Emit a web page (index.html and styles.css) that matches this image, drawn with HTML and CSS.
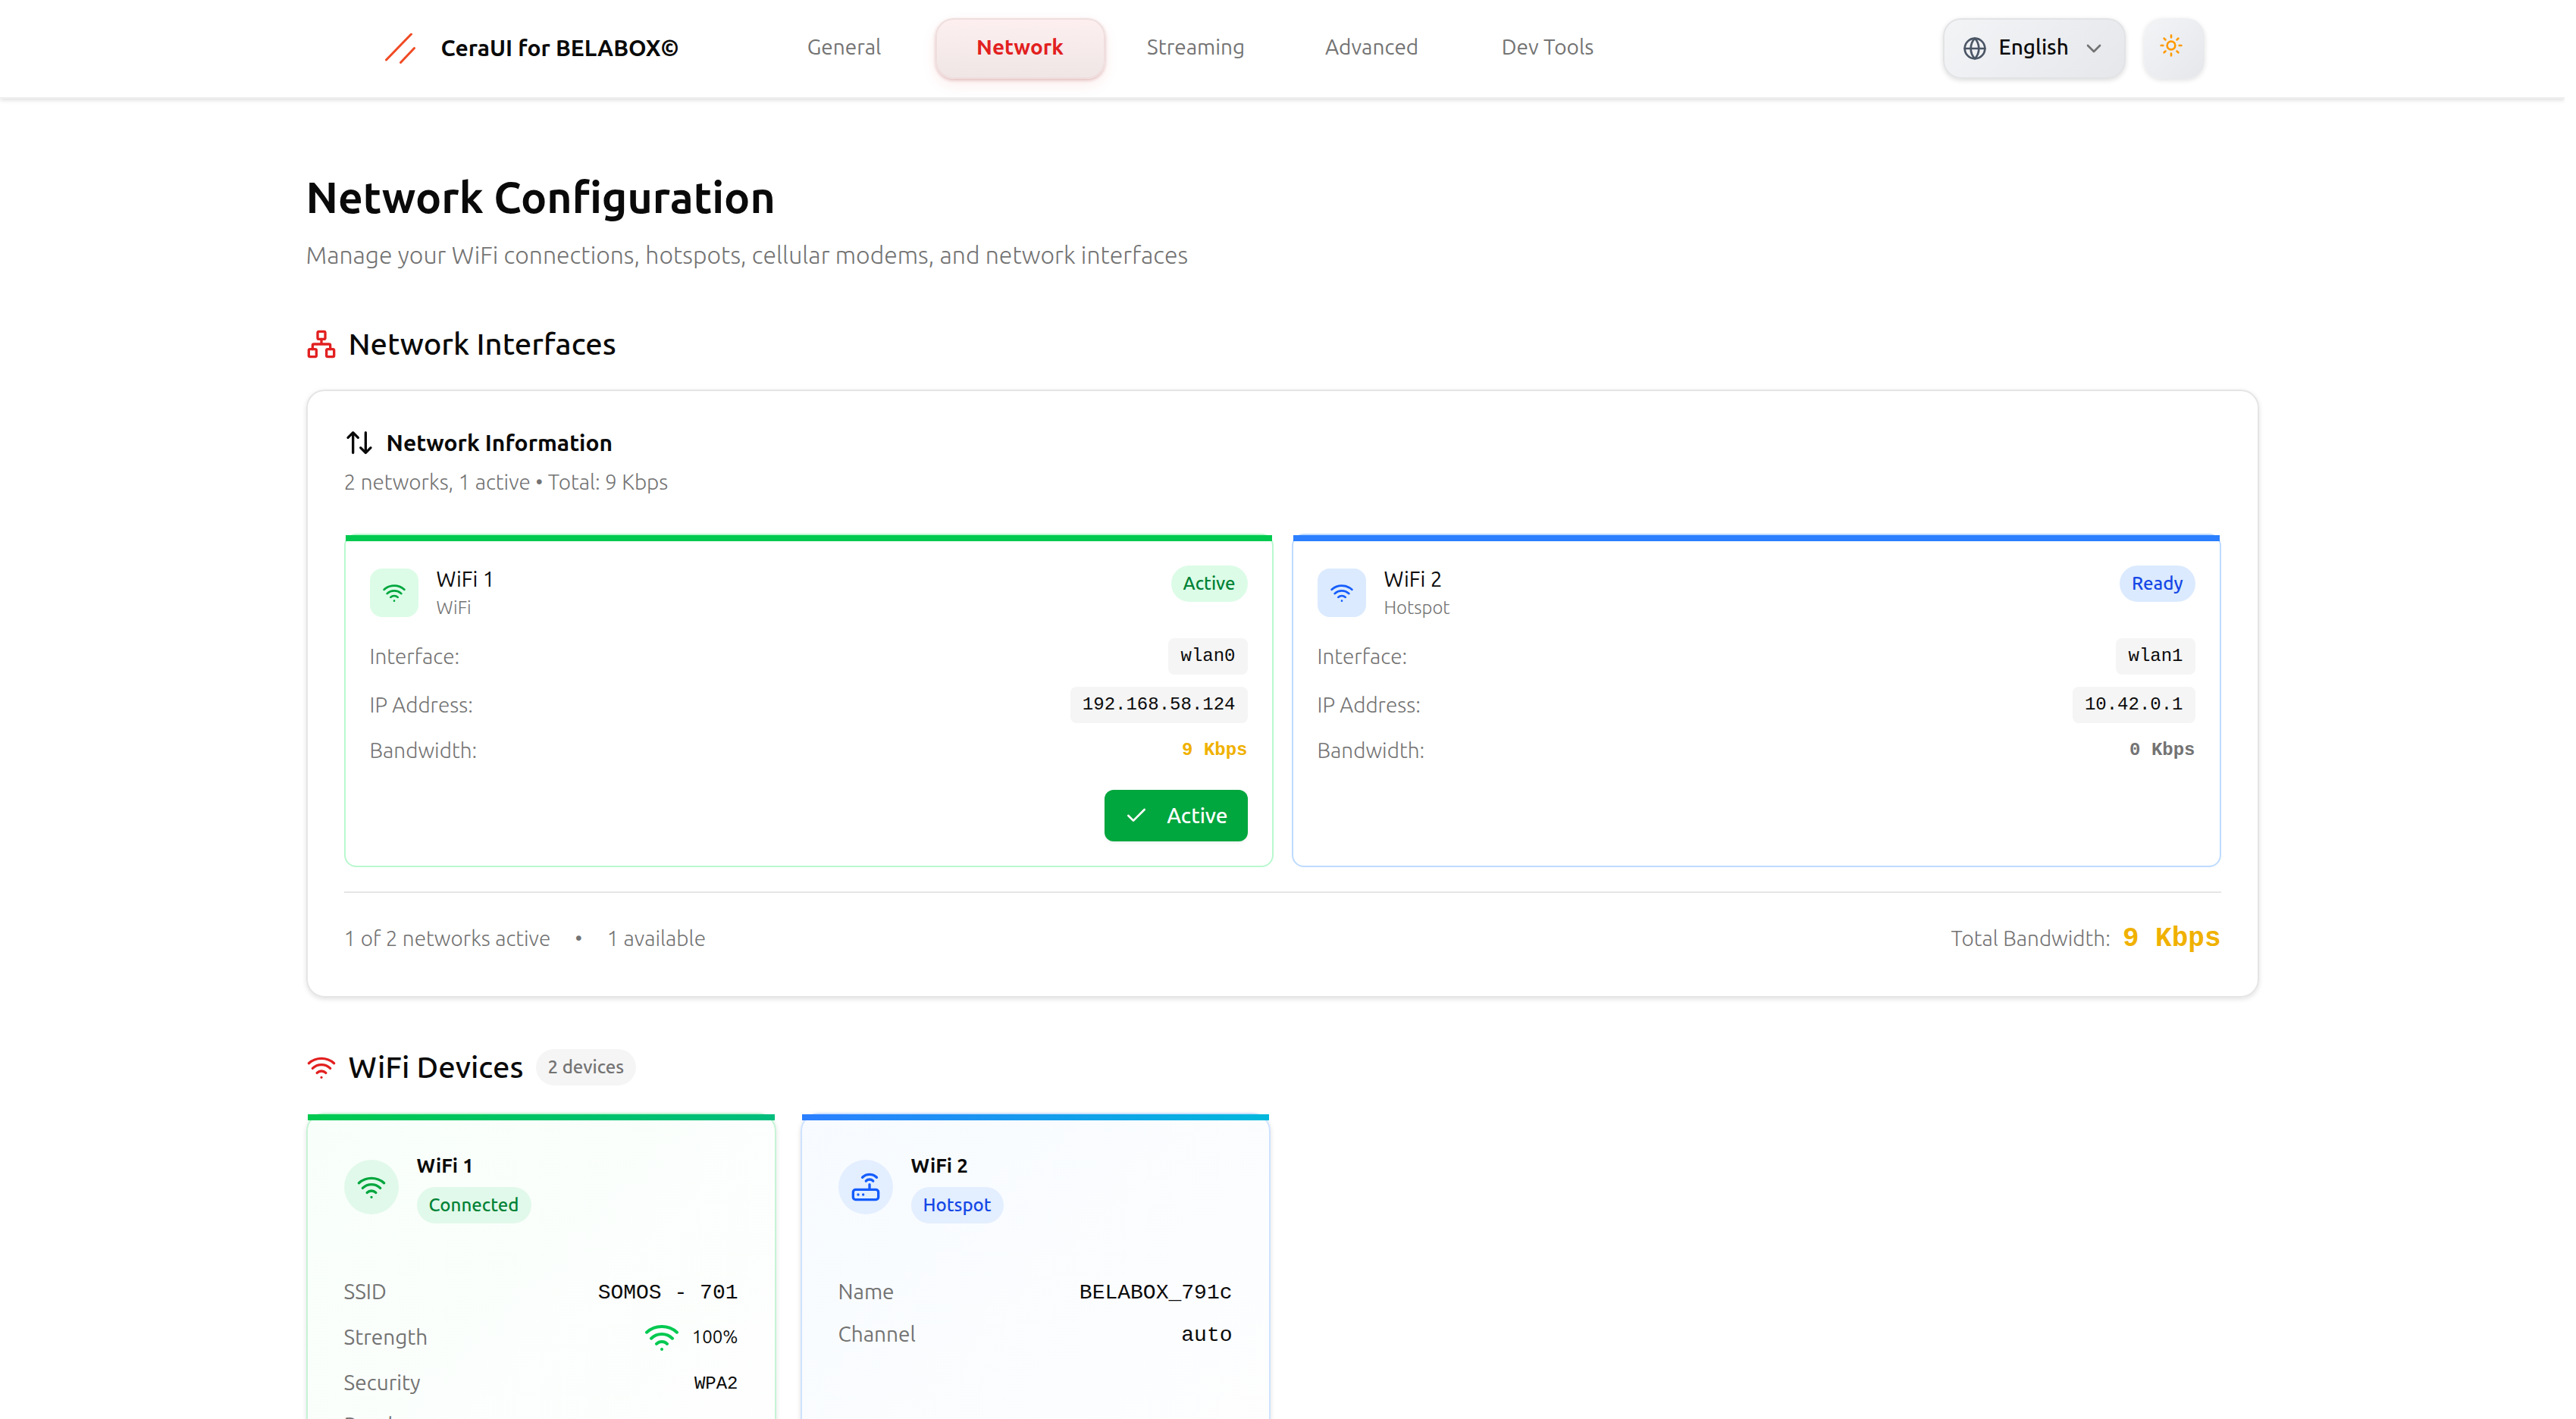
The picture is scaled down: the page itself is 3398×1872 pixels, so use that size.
FILE: index.html
```html
<!DOCTYPE html>
<html lang="en">
<head>
<meta charset="utf-8">
<meta name="viewport" content="width=device-width, initial-scale=1">
<title>CeraUI for BELABOX©</title>
<link rel="stylesheet" href="styles.css">
</head>
<body>
<svg class="sprite" aria-hidden="true">
  <symbol id="wifi" viewBox="0 0 24 24"><path d="M12 20h.01M2 8.82a15 15 0 0 1 20 0M5 12.859a10 10 0 0 1 14 0M8.5 16.429a5 5 0 0 1 7 0"/></symbol>
  <symbol id="network" viewBox="0 0 24 24"><rect x="16" y="16" width="6" height="6" rx="1"/><rect x="2" y="16" width="6" height="6" rx="1"/><rect x="9" y="2" width="6" height="6" rx="1"/><path d="M5 16v-3a1 1 0 0 1 1-1h12a1 1 0 0 1 1 1v3M12 12V8"/></symbol>
  <symbol id="arrows" viewBox="0 0 24 24"><path d="m21 16-4 4-4-4M17 20V4M3 8l4-4 4 4M7 4v16"/></symbol>
  <symbol id="router" viewBox="0 0 24 24"><rect x="2" y="14" width="20" height="8" rx="2"/><path d="M6.01 18H6M10.01 18H10M15 10v4M17.84 7.17a4 4 0 0 0-5.66 0M20.66 4.34a8 8 0 0 0-11.31 0"/></symbol>
  <symbol id="check" viewBox="0 0 24 24"><path d="M20 6 9 17l-5-5"/></symbol>
  <symbol id="globe" viewBox="0 0 24 24"><circle cx="12" cy="12" r="10"/><path d="M12 2a14.5 14.5 0 0 0 0 20 14.5 14.5 0 0 0 0-20M2 12h20"/></symbol>
  <symbol id="chevron" viewBox="0 0 24 24"><path d="m6 9 6 6 6-6"/></symbol>
  <symbol id="sun" viewBox="0 0 24 24"><circle cx="12" cy="12" r="4"/><path d="M12 2v2M12 20v2M4.93 4.93l1.41 1.41M17.66 17.66l1.41 1.41M2 12h2M20 12h2M6.34 17.66l-1.41 1.41M19.07 4.93l-1.41 1.41"/></symbol>
</svg>

<header class="topbar">
  <div class="topbar-inner">
    <a class="brand" href="#">
      <svg class="logo" viewBox="0 0 40 40" aria-hidden="true"><path d="M1.500 35 34.500 1M20.500 38.500 38.500 19.500"/></svg>
      <span>CeraUI for BELABOX©</span>
    </a>
    <nav class="tabs">
      <a class="tab" href="#general">General</a>
      <a class="tab tab-active" href="#network" aria-current="page">Network</a>
      <a class="tab" href="#streaming">Streaming</a>
      <a class="tab" href="#advanced">Advanced</a>
      <a class="tab" href="#devtools">Dev Tools</a>
    </nav>
    <div class="controls">
      <div class="language">
        <svg class="icon icon-32 globe" aria-hidden="true"><use href="#globe"/></svg>
        <select class="language-select" aria-label="Language"><option>English</option></select>
        <svg class="icon icon-32 chevron" aria-hidden="true"><use href="#chevron"/></svg>
      </div>
      <button class="theme" type="button" aria-label="Toggle theme"><svg class="icon icon-32" aria-hidden="true"><use href="#sun"/></svg></button>
    </div>
  </div>
</header>

<main class="page">
  <div class="intro">
    <h1>Network Configuration</h1>
    <p>Manage your WiFi connections, hotspots, cellular modems, and network interfaces</p>
  </div>

  <section class="section">
    <h2 class="section-title"><svg class="icon icon-40 accent" aria-hidden="true"><use href="#network"/></svg>Network Interfaces</h2>
    <div class="panel">
      <h3 class="panel-title"><svg class="icon icon-40" aria-hidden="true"><use href="#arrows"/></svg>Network Information</h3>
      <p class="panel-sub">2 networks, 1 active • Total: 9 Kbps</p>

      <div class="interfaces">
        <article class="iface green">
          <div class="bar"></div>
          <div class="iface-body">
            <div class="iface-head">
              <span class="tile"><svg class="icon icon-32" aria-hidden="true"><use href="#wifi"/></svg></span>
              <div class="iface-name"><h4>WiFi 1</h4><p>WiFi</p></div>
              <span class="badge">Active</span>
            </div>
            <dl class="facts">
              <div class="fact"><dt>Interface:</dt><dd class="chip">wlan0</dd></div>
              <div class="fact"><dt>IP Address:</dt><dd class="chip">192.168.58.124</dd></div>
              <div class="fact"><dt>Bandwidth:</dt><dd class="rate rate-on">9 Kbps</dd></div>
            </dl>
            <button class="activate" type="button"><svg class="icon icon-32" aria-hidden="true"><use href="#check"/></svg>Active</button>
          </div>
        </article>

        <article class="iface blue">
          <div class="bar"></div>
          <div class="iface-body">
            <div class="iface-head">
              <span class="tile"><svg class="icon icon-32" aria-hidden="true"><use href="#wifi"/></svg></span>
              <div class="iface-name"><h4>WiFi 2</h4><p>Hotspot</p></div>
              <span class="badge">Ready</span>
            </div>
            <dl class="facts">
              <div class="fact"><dt>Interface:</dt><dd class="chip">wlan1</dd></div>
              <div class="fact"><dt>IP Address:</dt><dd class="chip">10.42.0.1</dd></div>
              <div class="fact"><dt>Bandwidth:</dt><dd class="rate">0 Kbps</dd></div>
            </dl>
          </div>
        </article>
      </div>

      <div class="summary">
        <div class="counts"><span>1 of 2 networks active</span><span>•</span><span>1 available</span></div>
        <div class="total"><span>Total Bandwidth:</span><strong>9 Kbps</strong></div>
      </div>
    </div>
  </section>

  <section class="section">
    <h2 class="section-title"><svg class="icon icon-40 accent" aria-hidden="true"><use href="#wifi"/></svg>WiFi Devices<span class="badge badge-count">2 devices</span></h2>
    <div class="devices">
      <article class="device green">
        <div class="bar"></div>
        <div class="device-body">
          <div class="device-head">
            <span class="disc"><svg class="icon icon-40" aria-hidden="true"><use href="#wifi"/></svg></span>
            <div><h3>WiFi 1</h3><span class="badge">Connected</span></div>
          </div>
          <dl class="details">
            <div class="detail"><dt>SSID</dt><dd class="mono">SOMOS - 701</dd></div>
            <div class="detail"><dt>Strength</dt><dd class="signal"><svg class="icon icon-48" aria-hidden="true"><use href="#wifi"/></svg>100%</dd></div>
            <div class="detail"><dt>Security</dt><dd class="mono mono-small">WPA2</dd></div>
            <div class="detail"><dt>Band</dt><dd></dd></div>
          </dl>
        </div>
      </article>

      <article class="device blue">
        <div class="bar"></div>
        <div class="device-body">
          <div class="device-head">
            <span class="disc"><svg class="icon icon-40" aria-hidden="true"><use href="#router"/></svg></span>
            <div><h3>WiFi 2</h3><span class="badge">Hotspot</span></div>
          </div>
          <dl class="details">
            <div class="detail"><dt>Name</dt><dd class="mono">BELABOX_791c</dd></div>
            <div class="detail"><dt>Channel</dt><dd class="mono">auto</dd></div>
          </dl>
        </div>
      </article>
    </div>
  </section>
</main>
</body>
</html>
```
FILE: styles.css
```css
:root {
  --ink: #0a0a0a;
  --muted: #737373;
  --line: #e5e5e5;
  --sans: Ubuntu, "Open Sans", sans-serif;
  --mono: "Liberation Mono", monospace;
}

* { box-sizing: border-box; }
h1, h2, h3, h4, p, dl, dd { margin: 0; }
h2 { font-weight: 500; }

body {
  margin: 0 15px 0 0;
  background: #fff;
  color: var(--ink);
  font: 400 28px/40px var(--sans);
}

a { color: inherit; text-decoration: none; }
button, select { font: inherit; color: inherit; border: 0; }

.sprite { display: none; }
.icon {
  display: block;
  flex: none;
  fill: none;
  stroke: currentColor;
  stroke-width: 2;
  stroke-linecap: round;
  stroke-linejoin: round;
}
.icon-32 { width: 32px; height: 32px; }
.icon-40 { width: 40px; height: 40px; }
.icon-48 { width: 48px; height: 48px; }
.accent { color: #e22020; }

.green {
  --bar: #00c950;
  --bar-end: #00bc7d;
  --edge: #b9f8cf;
  --device-edge: #c6f4d6;
  --tint: #dcfce7;
  --device-tint: #e1f9ea;
  --strong: #00a63e;
  --label: #008236;
  --wash: #f8fffa;
}
.blue {
  --bar: #2b7fff;
  --bar-end: #00b8db;
  --edge: #bedbff;
  --device-edge: #cfe2ff;
  --tint: #dbeafe;
  --device-tint: #e3eeff;
  --strong: #155dfc;
  --label: #1447e6;
  --wash: #f7fbff;
}

/* Top bar */
.topbar {
  border-bottom: 2px solid #f0f0f0;
  background: #fff;
  box-shadow: 0 2px 6px rgba(0, 0, 0, .14);
}
.topbar-inner {
  display: flex;
  align-items: center;
  max-width: 2432px;
  height: 128px;
  margin: 0 auto;
}
.brand {
  display: flex;
  align-items: center;
  gap: 34px;
  padding-left: 32px;
  font-size: 30px;
  font-weight: 700;
}
.brand span { padding-bottom: 2px; }
.logo { width: 40px; height: 40px; fill: none; stroke: #f04a24; stroke-width: 3; stroke-linecap: round; }
.tabs { display: flex; gap: 8px; margin-left: 106px; }
.tab {
  display: flex;
  align-items: center;
  justify-content: center;
  width: 224px;
  height: 80px;
  padding-bottom: 4px;
  border-radius: 24px;
  color: var(--muted);
}
.tab-active {
  border: 2px solid #efdede;
  background: linear-gradient(#fdefef, #f0e6e6);
  box-shadow: 0 2px 4px rgba(160, 60, 60, .3), 0 8px 20px rgba(226, 32, 32, .08);
  color: #e22020;
  font-weight: 700;
}
.controls { display: flex; gap: 24px; margin-left: auto; }
.language {
  display: flex;
  align-items: center;
  gap: 16px;
  height: 80px;
  padding: 0 24px;
  border: 2px solid #e2e3e5;
  border-radius: 24px;
  background: linear-gradient(135deg, #f3f4f6, #e5e7eb);
  box-shadow: 0 2px 6px rgba(0, 0, 0, .14);
}
.language-select {
  appearance: none;
  height: 44px;
  padding: 0 0 8px;
  background: none;
  font-weight: 500;
}
.globe { color: #4a5565; }
.chevron { color: var(--muted); }
.theme {
  display: flex;
  align-items: center;
  justify-content: center;
  width: 80px;
  height: 80px;
  padding: 0 8px 8px 0;
  border-radius: 24px;
  background: linear-gradient(135deg, #f3f4f6, #e5e7eb);
  box-shadow: 0 2px 6px rgba(0, 0, 0, .12);
  color: #fe9a00;
}

/* Page */
.page { max-width: 2576px; margin: 0 auto; padding: 96px 0; }
.intro h1 { margin-bottom: 16px; font-size: 57px; line-height: 68px; font-weight: 700; }
.intro p { font-size: 32px; line-height: 52px; font-weight: 300; color: var(--muted); }
.section { margin-top: 64px; }
.section-title {
  display: flex;
  align-items: center;
  gap: 16px;
  margin-bottom: 32px;
  font-size: 40px;
  line-height: 56px;
}

.badge {
  padding: 0 16px;
  border-radius: 24px;
  background: var(--tint);
  color: var(--label);
  font-size: 24px;
  font-weight: 500;
  line-height: 48px;
}
.badge-count { background: #f5f5f5; color: var(--muted); }

/* Network information */
.panel {
  padding: 48px;
  border: 2px solid var(--line);
  border-radius: 24px;
  box-shadow: 0 2px 6px rgba(0, 0, 0, .12);
}
.panel-title { display: flex; align-items: center; gap: 16px; font-size: 30px; font-weight: 700; }
.panel-sub { margin-top: 12px; font-weight: 300; color: var(--muted); }
.interfaces { display: grid; grid-template-columns: 1fr 1fr; gap: 24px; margin-top: 48px; }
.iface { border: 2px solid var(--edge); border-radius: 16px; }
.bar { height: 8px; background: var(--bar); }
.iface-body { display: flex; flex-direction: column; padding: 32px; }
.iface-head { display: flex; align-items: flex-start; gap: 24px; }
.tile {
  display: grid;
  place-items: center;
  width: 64px;
  height: 64px;
  margin-top: 4px;
  border-radius: 16px;
  background: var(--tint);
  color: var(--strong);
}
.iface-name { flex: 1; line-height: 36px; }
.iface-name h4 { font-weight: 400; }
.iface-name p { font-size: 24px; line-height: 40px; font-weight: 300; color: var(--muted); }
.facts { display: grid; gap: 16px; margin-top: 20px; }
.fact { display: flex; align-items: center; justify-content: space-between; }
.fact dt { font-weight: 300; color: var(--muted); line-height: 36px; }
.chip {
  padding: 0 16px;
  border-radius: 8px;
  background: #f5f5f5;
  font: 24px/48px var(--mono);
}
.rate { font: 700 24px/40px var(--mono); color: var(--muted); }
.rate-on { color: #f0b100; }
.activate {
  display: flex;
  align-items: center;
  align-self: flex-end;
  gap: 24px;
  height: 68px;
  margin-top: 32px;
  padding: 0 26px;
  border-radius: 12px;
  background: var(--strong);
  box-shadow: 0 2px 4px rgba(0, 0, 0, .06);
  color: #fff;
  font-weight: 500;
}
.summary {
  display: flex;
  align-items: center;
  justify-content: space-between;
  margin-top: 32px;
  padding-top: 32px;
  border-top: 2px solid var(--line);
  color: var(--muted);
  font-weight: 300;
  line-height: 56px;
}
.counts { display: flex; gap: 32px; }
.total { display: flex; align-items: baseline; gap: 16px; }
.total strong { font: 700 36px/48px var(--mono); color: #f0b100; }

/* WiFi devices */
.devices { display: grid; grid-template-columns: repeat(4, 1fr); gap: 32px; }
.device {
  border: 2px solid var(--device-edge);
  border-radius: 24px;
  background: linear-gradient(135deg, var(--wash), #fefefe);
  box-shadow: 0 2px 6px rgba(0, 0, 0, .12);
}
.device .bar { background: linear-gradient(90deg, var(--bar), var(--bar-end)); }
.device .badge { display: block; background: var(--device-tint); }
.device-body { padding: 40px 48px 48px; }
.device-head { display: flex; align-items: center; gap: 24px; }
.device-head h3 { margin-bottom: 8px; font-size: 26px; font-weight: 700; }
.disc {
  display: grid;
  place-items: center;
  width: 72px;
  height: 72px;
  border-radius: 50%;
  background: var(--device-tint);
  color: var(--strong);
}
.details { display: grid; gap: 16px; margin-top: 70px; }
.detail { display: flex; align-items: center; justify-content: space-between; }
.detail dt { color: var(--muted); }
.mono { font-family: var(--mono); line-height: 44px; margin-bottom: -4px; }
.mono-small { font-size: 24px; }
.signal { display: flex; align-items: center; gap: 16px; font-size: 24px; }
.signal .icon { color: var(--bar); }
```
